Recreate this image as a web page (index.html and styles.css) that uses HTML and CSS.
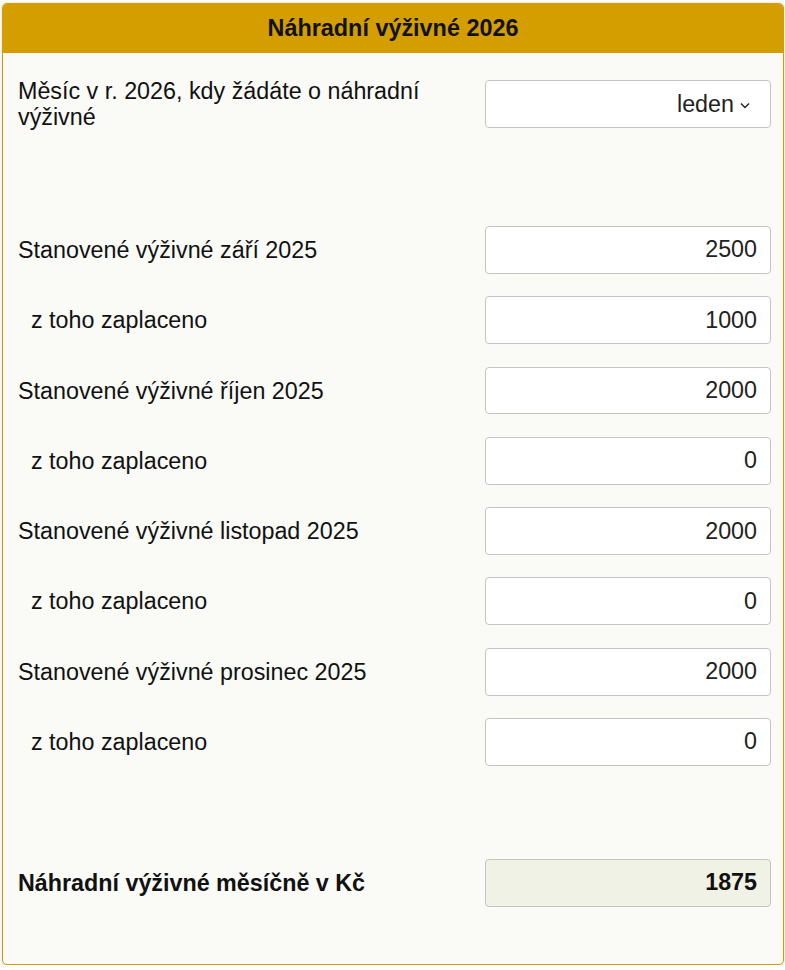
FILE: index.html
```html
<!DOCTYPE html>
<html lang="cs">
<head>
<meta charset="utf-8">
<title>Náhradní výživné 2026</title>
<link rel="stylesheet" href="styles.css">
</head>
<body>
<div class="card">
  <div class="card-header">Náhradní výživné 2026</div>
  <div class="card-body">
    <div class="row">
      <div class="label">Měsíc v r. 2026, kdy žádáte o náhradní výživné</div>
      <div class="field select"><span>leden</span><svg class="chev" width="10" height="7" viewBox="0 0 10 7"><path d="M1 1.5l4 4 4-4" fill="none" stroke="#222" stroke-width="1.4"/></svg></div>
    </div>
    <div class="rows">
      <div class="row"><div class="label">Stanovené výživné září 2025</div><div class="field">2500</div></div>
      <div class="row"><div class="label sub">z toho zaplaceno</div><div class="field">1000</div></div>
      <div class="row"><div class="label">Stanovené výživné říjen 2025</div><div class="field">2000</div></div>
      <div class="row"><div class="label sub">z toho zaplaceno</div><div class="field">0</div></div>
      <div class="row"><div class="label">Stanovené výživné listopad 2025</div><div class="field">2000</div></div>
      <div class="row"><div class="label sub">z toho zaplaceno</div><div class="field">0</div></div>
      <div class="row"><div class="label">Stanovené výživné prosinec 2025</div><div class="field">2000</div></div>
      <div class="row"><div class="label sub">z toho zaplaceno</div><div class="field">0</div></div>
    </div>
    <div class="row result">
      <div class="label">Náhradní výživné měsíčně v Kč</div>
      <div class="field readonly">1875</div>
    </div>
  </div>
</div>
</body>
</html>
```
FILE: styles.css
```css
html, body {
  margin: 0;
  padding: 0;
  background: #ffffff;
}
body {
  padding: 3px 1px 0 2px;
  font-family: "Liberation Sans", Arial, sans-serif;
  color: #111;
}
.card {
  border: 1px solid #d49e00;
  border-radius: 5px;
  background: #fafaf6;
  box-shadow: 0 0 3px rgba(0,0,0,0.18);
  overflow: hidden;
  height: 962px;
  box-sizing: border-box;
}
.card-header {
  background: #d49e00;
  height: 49px;
  display: flex;
  align-items: center;
  justify-content: center;
  font-weight: bold;
  font-size: 23.4px;
  color: #111;
}
.card-body {
  padding: 25px 12px 0 15px;
}
.row {
  display: flex;
  align-items: center;
  justify-content: space-between;
  gap: 20px;
}
.label {
  font-size: 23.3px;
  line-height: 26px;
  flex: 1;
}
.label.sub {
  padding-left: 13px;
}
.field {
  width: 286px;
  height: 48px;
  box-sizing: border-box;
  border: 1px solid #c4c4c4;
  border-radius: 4px;
  background: #ffffff;
  display: flex;
  align-items: center;
  justify-content: flex-end;
  padding-right: 13px;
  font-size: 23.3px;
  color: #222;
  flex: none;
}
.field.select {
  gap: 6px;
  padding-right: 20px;
}
.chev {
  display: block;
  margin-top: 2px;
}
.rows {
  margin-top: 96px;
  display: flex;
  flex-direction: column;
  gap: 22.4px;
}
.rows .field {
  height: 47.9px;
}
.result {
  margin-top: 93px;
}
.result .label {
  font-weight: bold;
}
.field.readonly {
  background: #f1f2e6;
  font-weight: bold;
  color: #111;
}
```
